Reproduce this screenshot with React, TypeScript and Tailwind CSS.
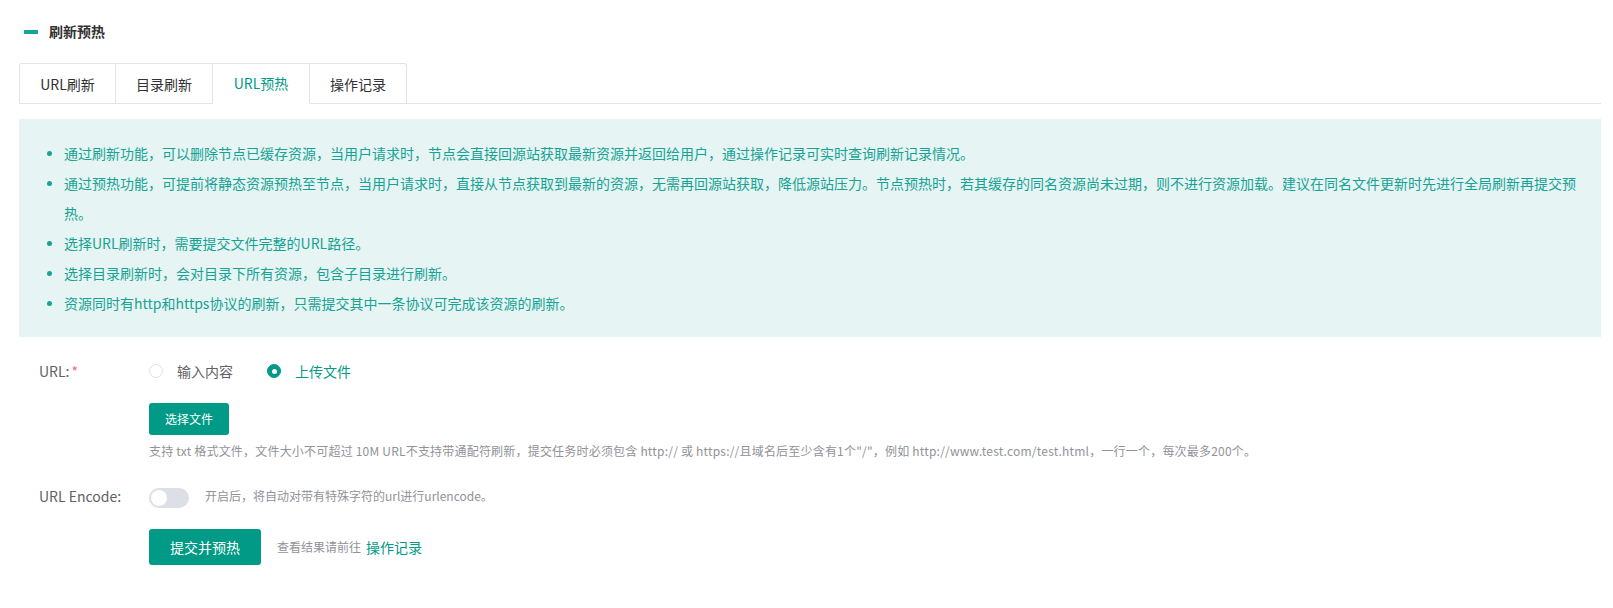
import { useState } from 'react';

const tips = [
  '通过刷新功能，可以删除节点已缓存资源，当用户请求时，节点会直接回源站获取最新资源并返回给用户，通过操作记录可实时查询刷新记录情况。',
  '通过预热功能，可提前将静态资源预热至节点，当用户请求时，直接从节点获取到最新的资源，无需再回源站获取，降低源站压力。节点预热时，若其缓存的同名资源尚未过期，则不进行资源加载。建议在同名文件更新时先进行全局刷新再提交预热。',
  '选择URL刷新时，需要提交文件完整的URL路径。',
  '选择目录刷新时，会对目录下所有资源，包含子目录进行刷新。',
  '资源同时有http和https协议的刷新，只需提交其中一条协议可完成该资源的刷新。',
];

const tabs = ['URL刷新', '目录刷新', 'URL预热', '操作记录'];

type Mode = 'input' | 'file';

function Radio({ checked, label, onClick }: { checked: boolean; label: string; onClick: () => void }) {
  return (
    <label className="flex items-center cursor-pointer" onClick={onClick}>
      <span
        className={[
          'w-[14px] h-[14px] rounded-full border flex items-center justify-center',
          checked ? 'border-[#009a86] bg-[#009a86]' : 'border-[#dcdfe6] bg-white',
        ].join(' ')}
      >
        {checked && <span className="w-[5px] h-[5px] rounded-full bg-white" />}
      </span>
      <span className={`ml-[14px] ${checked ? 'text-[#009a86]' : 'text-[#606266]'}`}>{label}</span>
    </label>
  );
}

export default function App() {
  const [activeTab, setActiveTab] = useState(2);
  const [mode, setMode] = useState<Mode>('file');
  const [encode, setEncode] = useState(false);

  return (
    <div className="min-h-[608px] bg-white pl-[19px] pr-[12px] text-[#303133] font-['Noto_Sans_CJK_SC','Noto_Sans',sans-serif]">
      {/* ── Title ─────────────────────────────── */}
      <div className="flex items-center h-[63px]">
        <span className="ml-[5px] w-[14px] h-[4px] bg-[#17a594]" />
        <span className="ml-[11px] text-[14px] font-bold text-[#333]">刷新预热</span>
      </div>

      {/* ── Tabs ──────────────────────────────── */}
      <div className="flex border-b border-[#e2e2ec] h-[41px]">
        {tabs.map((t, i) => {
          const active = i === activeTab;
          return (
            <button
              key={t}
              onClick={() => setActiveTab(i)}
              className={[
                'w-[97px] h-[41px] border-t border-r border-[#e2e2ec] text-[14px] -mb-px',
                i === 0 ? 'border-l rounded-tl-[3px]' : '',
                i === tabs.length - 1 ? 'rounded-tr-[3px]' : '',
                active ? 'bg-white text-[#009a86] border-b border-b-white' : 'text-[#303133]',
              ].join(' ')}
            >
              {t}
            </button>
          );
        })}
      </div>

      {/* ── Notice ────────────────────────────── */}
      <div className="mt-[15px] bg-[#e6f4f3] pl-[28px] pr-[20px] pt-[19px] pb-[19px] text-[14px] leading-[30px] text-[#16a394]">
        <ul>
          {tips.map((tip) => (
            <li key={tip} className="flex">
              <span className="w-[17px] shrink-0 flex pt-[13px]">
                <span className="w-[5px] h-[5px] rounded-full bg-[#16a394]" />
              </span>
              <span>{tip}</span>
            </li>
          ))}
        </ul>
      </div>

      {/* ── Form ──────────────────────────────── */}
      <div className="pt-[23px] text-[14px]">
        <div className="flex items-center h-[22px]">
          <div className="w-[130px] pl-[20px] text-[#606266]">
            URL:<span className="ml-[2px] text-[#f56c6c]">*</span>
          </div>
          <Radio checked={mode === 'input'} label="输入内容" onClick={() => setMode('input')} />
          <div className="ml-[34px]">
            <Radio checked={mode === 'file'} label="上传文件" onClick={() => setMode('file')} />
          </div>
        </div>

        <div className="pl-[130px] pt-[21px]">
          <button className="h-[32px] w-[80px] rounded-[3px] bg-[#009a86] text-white text-[12px]">选择文件</button>
          <p className="mt-[7px] text-[12px] leading-[18px] tracking-[0.2px] text-[#909399]">
            支持 txt 格式文件，文件大小不可超过 10M URL不支持带通配符刷新，提交任务时必须包含 http:// 或 https://且域名后至少含有1个"/"，例如 http://www.test.com/test.html，一行一个，每次最多200个。
          </p>
        </div>

        <div className="flex items-center mt-[25px] h-[22px]">
          <div className="w-[130px] pl-[20px] text-[#606266]">URL Encode:</div>
          <button
            onClick={() => setEncode((v) => !v)}
            className={`relative mt-[3px] w-[40px] h-[20px] rounded-full ${encode ? 'bg-[#009a86]' : 'bg-[#dcdfe6]'}`}
          >
            <span
              className={`absolute top-[2px] w-[16px] h-[16px] rounded-full bg-white ${encode ? 'left-[22px]' : 'left-[2px]'}`}
            />
          </button>
          <span className="ml-[16px] text-[12px] text-[#909399]">开启后，将自动对带有特殊字符的url进行urlencode。</span>
        </div>

        <div className="flex items-center pl-[130px] mt-[22px]">
          <button className="h-[36px] w-[112px] rounded-[3px] bg-[#009a86] text-white text-[14px]">提交并预热</button>
          <span className="ml-[16px] text-[12px] text-[#909399]">查看结果请前往</span>
          <a className="ml-[5px] text-[14px] text-[#009a86] cursor-pointer">操作记录</a>
        </div>
      </div>
    </div>
  );
}
